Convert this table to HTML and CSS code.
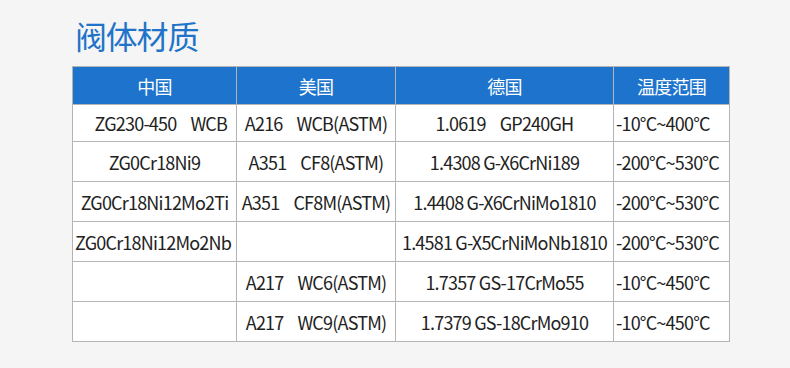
FILE: index.html
```html
<!DOCTYPE html>
<html lang="zh">
<head>
<meta charset="utf-8">
<link rel="stylesheet" href="styles.css">
</head>
<body>
<div class="page">
  <h1 class="title">阀体材质</h1>
  <table class="spec">
    <colgroup>
      <col class="c1"><col class="c2"><col class="c3"><col class="c4">
    </colgroup>
    <thead>
      <tr class="head"><th>中国</th><th>美国</th><th>德国</th><th>温度范围</th></tr>
    </thead>
    <tbody>
      <tr class="r1"><td class="rgt">ZG230-450<span class="gap"></span>WCB</td><td class="ctr">A216<span class="gap"></span>WCB(ASTM)</td><td class="ctr shift">1.0619<span class="gap"></span>GP240GH</td><td class="lft">-10°C~400°C</td></tr>
      <tr><td class="ctr">ZG0Cr18Ni9</td><td class="ctr">A351<span class="gap"></span>CF8(ASTM)</td><td class="ctr">1.4308 G-X6CrNi189</td><td class="lft">-200°C~530°C</td></tr>
      <tr><td class="ctr">ZG0Cr18Ni12Mo2Ti</td><td class="ctr">A351<span class="gap"></span>CF8M(ASTM)</td><td class="ctr">1.4408 G-X6CrNiMo1810</td><td class="lft">-200°C~530°C</td></tr>
      <tr><td class="lft">ZG0Cr18Ni12Mo2Nb</td><td></td><td class="ctr">1.4581 G-X5CrNiMoNb1810</td><td class="lft">-200°C~530°C</td></tr>
      <tr><td></td><td class="ctr">A217<span class="gap"></span>WC6(ASTM)</td><td class="ctr">1.7357 GS-17CrMo55</td><td class="lft">-10°C~450°C</td></tr>
      <tr><td></td><td class="ctr">A217<span class="gap"></span>WC9(ASTM)</td><td class="ctr">1.7379 GS-18CrMo910</td><td class="lft">-10°C~450°C</td></tr>
    </tbody>
  </table>
</div>
</body>
</html>
```
FILE: styles.css
```css
html, body {
  margin: 0;
  padding: 0;
  background: #f5f5f5;
}
body {
  width: 790px;
  height: 368px;
  overflow: hidden;
  font-family: "Noto Sans CJK SC", "Noto Sans", sans-serif;
  color: #222;
}
.page {
  padding: 15px 0 0 72px;
}
.title {
  margin: 0 0 11px 3px;
  font-size: 32px;
  line-height: 40px;
  font-weight: 400;
  letter-spacing: -1.2px;
  color: #1f74c9;
}
.spec {
  border-collapse: collapse;
  table-layout: fixed;
  width: 657px;
  background: #fff;
  font-size: 18px;
  letter-spacing: -0.8px;
}
.c1 { width: 164px; }
.c2 { width: 159px; }
.c3 { width: 218px; }
.c4 { width: 116px; }
.spec th, .spec td {
  border: 1px solid #b4b4b4;
  padding: 0 2px;
  white-space: nowrap;
  overflow: visible;
}
.spec th {
  background: #1e74cc;
  color: #fff;
  font-weight: 400;
  height: 37px;
  text-align: center;
}
.spec td {
  height: 39px;
}
.spec .r1 td {
  height: 36px;
}
.gap {
  display: inline-block;
  width: 14px;
}
.ctr { text-align: center; }
.lft { text-align: left; padding-left: 4px; }
.spec .rgt { text-align: right; padding-right: 9px; }
.shift { padding-left: 16px; }
```
